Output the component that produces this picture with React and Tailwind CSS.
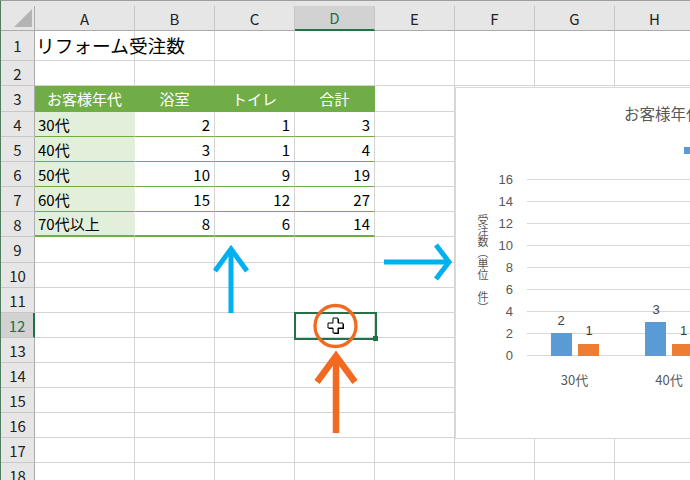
import React from "react";

const COLS = [
  { l: "A", w: "w-[100px]" },
  { l: "B", w: "w-[80px]" },
  { l: "C", w: "w-[80px]" },
  { l: "D", w: "w-[80px]" },
  { l: "E", w: "w-[80px]" },
  { l: "F", w: "w-[80px]" },
  { l: "G", w: "w-[80px]" },
  { l: "H", w: "w-[80px]" },
];

const ROWS = [
  { n: 1, h: "h-[30px]" },
  { n: 2, h: "h-[25px]" },
  { n: 3, h: "h-[26px]" },
  { n: 4, h: "h-[25px]" },
  { n: 5, h: "h-[25px]" },
  { n: 6, h: "h-[25px]" },
  { n: 7, h: "h-[25px]" },
  { n: 8, h: "h-[25px]" },
  { n: 9, h: "h-[26px]" },
  { n: 10, h: "h-[25px]" },
  { n: 11, h: "h-[25px]" },
  { n: 12, h: "h-[25px]" },
  { n: 13, h: "h-[25px]" },
  { n: 14, h: "h-[25px]" },
  { n: 15, h: "h-[25px]" },
  { n: 16, h: "h-[25px]" },
  { n: 17, h: "h-[25px]" },
  { n: 18, h: "h-[25px]" },
];

const TABLE = {
  3: ["お客様年代", "浴室", "トイレ", "合計"],
  4: ["30代", 2, 1, 3],
  5: ["40代", 3, 1, 4],
  6: ["50代", 10, 9, 19],
  7: ["60代", 15, 12, 27],
  8: ["70代以上", 8, 6, 14],
};

const cellClass = (n, ci) => {
  const inTable = ci < 4 && TABLE[n];
  if (!inTable) return "border-r border-b border-[#d4d4d4]";
  if (n === 3)
    return "bg-[#70ad47] text-white justify-center border-r border-b border-[#70ad47]";
  const bottom = n === 8 ? "border-b-2" : "border-b";
  if (ci === 0)
    return `bg-[#e2efda] pl-[3px] border-r border-r-[#e2efda] ${bottom} border-b-[#70ad47]`;
  return `justify-end pr-[4px] border-r border-r-[#d4d4d4] ${bottom} border-b-[#70ad47]`;
};

const Row = ({ n, h }) => {
  const sel = n === 12;
  return (
    <div className={`flex ${h}`}>
      <div
        className={`w-[34px] shrink-0 flex items-center justify-center border-b border-b-[#c8c8c8] ${
          sel
            ? "bg-[#d2d2d2] text-[#217346] border-r-2 border-r-[#217346]"
            : "bg-[#e6e6e6] text-[#222] border-r border-r-[#ababab]"
        }`}
      >
        {n}
      </div>
      {COLS.map((c, ci) => (
        <div
          key={c.l}
          className={`${c.w} shrink-0 flex items-center whitespace-nowrap ${cellClass(n, ci)}`}
        >
          {n === 1 && ci === 0 && (
            <span className="pl-[1px] text-[18.7px] text-black">リフォーム受注数</span>
          )}
          {TABLE[n] && ci < 4 && <span>{TABLE[n][ci]}</span>}
        </div>
      ))}
    </div>
  );
};

const Chart = () => {
  const gy = (v) => 268.5 - v * 11;
  const bars = [
    { x: 96, v: 2, c: "#5b9bd5", lx: 106, ly: 233 },
    { x: 123, v: 1, c: "#ed7d31", lx: 134, ly: 243.5 },
    { x: 190, v: 3, c: "#5b9bd5", lx: 201, ly: 222 },
    { x: 217, v: 1, c: "#ed7d31", lx: 228.5, ly: 243.5 },
  ];
  return (
    <div className="absolute left-[454px] top-[86px] w-[240px] h-[352px] bg-white">
      <svg width="240" height="352" className="absolute left-0 top-0">
        <rect x="0.5" y="0.5" width="260" height="351" fill="#fff" stroke="#d9d9d9" />
        <text
          x="169"
          y="26"
          fontSize="15.5"
          fill="#595959"
          dominantBaseline="central"
          fontFamily="'Noto Sans CJK JP', sans-serif"
        >
          お客様年代別受注数
        </text>
        <rect x="229" y="60" width="7" height="7" fill="#5b9bd5" />
        {[0, 2, 4, 6, 8, 10, 12, 14, 16].map((v) => (
          <g key={v}>
            <line x1="72" x2="240" y1={gy(v)} y2={gy(v)} stroke="#d9d9d9" />
            <text
              x="58"
              y={gy(v)}
              textAnchor="end"
              dominantBaseline="central"
              fontSize="13"
              fill="#595959"
              fontFamily="'Liberation Sans', sans-serif"
            >
              {v}
            </text>
          </g>
        ))}
        {bars.map((b) => (
          <g key={b.x}>
            <rect x={b.x} y={268 - b.v * 11} width="21" height={b.v * 11 + 1} fill={b.c} />
            <text
              x={b.lx}
              y={b.ly}
              textAnchor="middle"
              dominantBaseline="central"
              fontSize="13"
              fill="#404040"
              fontFamily="'Liberation Sans', sans-serif"
            >
              {b.v}
            </text>
          </g>
        ))}
        {[
          { x: 119.5, t: "30代" },
          { x: 214, t: "40代" },
        ].map((c) => (
          <text
            key={c.t}
            x={c.x}
            y="292"
            textAnchor="middle"
            dominantBaseline="central"
            fontSize="13"
            fill="#595959"
            fontFamily="'Noto Sans CJK JP', sans-serif"
          >
            {c.t}
          </text>
        ))}
      </svg>
      <div className="absolute left-[22px] top-[127px] text-[11px] leading-none text-[#595959] [writing-mode:vertical-rl]">
        受注数（単位　件）
      </div>
    </div>
  );
};

const Annotations = () => (
  <svg width="690" height="480" className="absolute left-0 top-0 pointer-events-none">
    {/* blue up arrow */}
    <line x1="230" y1="250" x2="230" y2="312" stroke="#00b0f0" strokeWidth="5" />
    <polyline
      points="214,270 230,248 246,270"
      fill="none"
      stroke="#00b0f0"
      strokeWidth="5"
      strokeLinejoin="miter"
    />
    {/* blue right arrow */}
    <line x1="383" y1="261" x2="446" y2="261" stroke="#00b0f0" strokeWidth="5" />
    <polyline
      points="435,244 448,261 435,278"
      fill="none"
      stroke="#00b0f0"
      strokeWidth="5"
      strokeLinejoin="miter"
    />
    {/* orange circle */}
    <circle cx="334.5" cy="325" r="20.5" fill="none" stroke="#f26a21" strokeWidth="3.3" />
    {/* orange up arrow */}
    <line x1="335" y1="358" x2="335" y2="432" stroke="#f26a21" strokeWidth="6.5" />
    <polyline
      points="316,381 335,355 354,381"
      fill="none"
      stroke="#f26a21"
      strokeWidth="6.5"
      strokeLinejoin="miter"
    />
    {/* cell cursor */}
    <polygon
      points="333,318 338,318 338,323 343,323 343,328 338,328 338,333 333,333 333,328 328,328 328,323 333,323"
      fill="#000"
    />
    <polygon
      points="332,317 337,317 337,322 342,322 342,327 337,327 337,332 332,332 332,327 327,327 327,322 332,322"
      fill="#fff"
      stroke="#000"
      strokeWidth="1"
    />
  </svg>
);

const App = () => {
  return (
    <div className="relative w-[690px] h-[480px] overflow-hidden bg-white border-l border-l-[#4f7f60] border-t border-t-[#9e9e9e] font-['Noto_Sans_CJK_JP',sans-serif] text-[15px] leading-none text-black">
      <div className="h-[5px] bg-[#e6e6e6]" />
      <div className="flex h-[25px] bg-[#e6e6e6] text-[#222]">
        <div className="relative w-[34px] shrink-0 border-r border-r-[#ababab] border-b border-b-[#ababab]">
          <div className="absolute right-[2px] bottom-[3px] w-0 h-0 border-l-[18px] border-l-transparent border-b-[18px] border-b-[#b4b4b4]" />
        </div>
        {COLS.map((c) => (
          <div
            key={c.l}
            className={`${c.w} shrink-0 flex items-center justify-center border-r border-r-[#c6c6c6] ${
              c.l === "D"
                ? "bg-[#d2d2d2] text-[#217346] border-b-2 border-b-[#217346]"
                : "border-b border-b-[#ababab]"
            }`}
          >
            {c.l}
          </div>
        ))}
      </div>
      {ROWS.map((r) => (
        <Row key={r.n} {...r} />
      ))}
      <Chart />
      <div className="absolute left-[293px] top-[311px] w-[83px] h-[28px] border-2 border-[#217346]" />
      <div className="absolute left-[372px] top-[335px] w-[5px] h-[5px] bg-[#217346]" />
      <Annotations />
    </div>
  );
};

export default App;
